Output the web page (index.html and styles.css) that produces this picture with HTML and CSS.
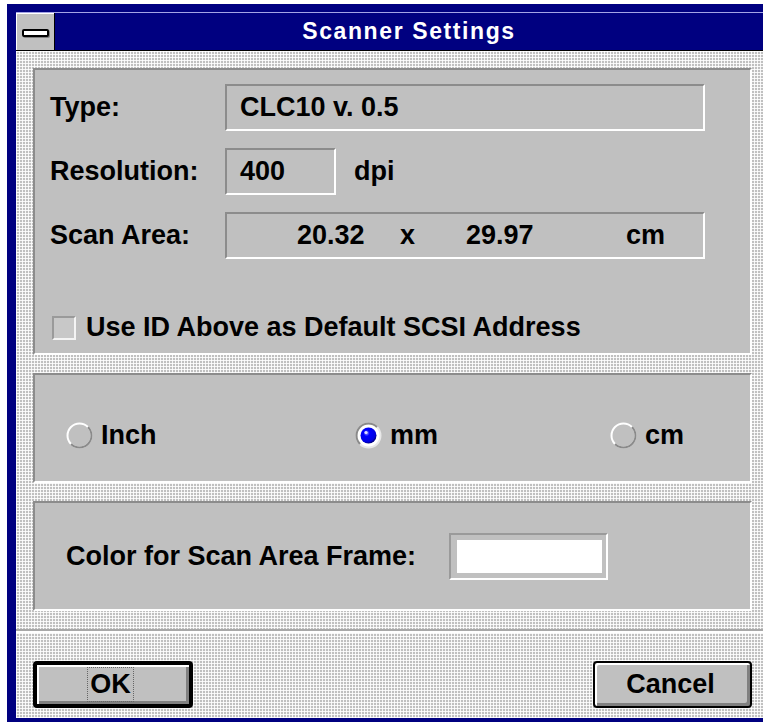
FILE: index.html
```html
<!DOCTYPE html>
<html lang="en">
<head>
<meta charset="utf-8">
<title>Scanner Settings</title>
<link rel="stylesheet" href="styles.css">
</head>
<body>
<div class="window">
  <div class="titlebar">
    <div class="sysmenu"><span class="dash"></span></div>
    <div class="title">Scanner Settings</div>
  </div>
  <div class="client">
    <div class="panels">
      <section class="panel panel-info">
        <div class="row">
          <span class="label">Type:</span>
          <div class="field field-wide">CLC10 v. 0.5</div>
        </div>
        <div class="row">
          <span class="label">Resolution:</span>
          <div class="field field-short">400</div>
          <span class="unit">dpi</span>
        </div>
        <div class="row">
          <span class="label">Scan Area:</span>
          <div class="field field-wide field-area">
            <span>20.32</span><span>x</span><span>29.97</span><span>cm</span>
          </div>
        </div>
        <label class="check-row">
          <span class="checkbox"></span>
          <span>Use ID Above as Default SCSI Address</span>
        </label>
      </section>

      <section class="panel panel-units">
        <label class="radio">
          <svg width="27" height="27" viewBox="0 0 27 27">
            <circle cx="13.5" cy="13.5" r="12" fill="#c0c0c0" stroke="#fff" stroke-width="2"/>
            <path d="M21.99 5.01 A12 12 0 0 1 5.01 21.99" fill="none" stroke="#8a8a8a" stroke-width="2"/>
          </svg>
          <span>Inch</span>
        </label>
        <label class="radio">
          <svg width="27" height="27" viewBox="0 0 27 27">
            <defs>
              <radialGradient id="ball" cx="0.38" cy="0.35" r="0.65">
                <stop offset="0" stop-color="#9a9aff"/>
                <stop offset="0.3" stop-color="#0000ff"/>
                <stop offset="0.85" stop-color="#0000e0"/>
                <stop offset="1" stop-color="#000080"/>
              </radialGradient>
            </defs>
            <circle cx="13.5" cy="13.5" r="12" fill="#fff" stroke="#e8e8e8" stroke-width="2"/>
            <path d="M5.01 21.99 A12 12 0 0 1 21.99 5.01" fill="none" stroke="#8a8a8a" stroke-width="2"/>
            <circle cx="13.5" cy="13.5" r="8" fill="url(#ball)"/>
            <circle cx="11" cy="10.5" r="1.6" fill="#e0e0ff"/>
          </svg>
          <span>mm</span>
        </label>
        <label class="radio">
          <svg width="27" height="27" viewBox="0 0 27 27">
            <circle cx="13.5" cy="13.5" r="12" fill="#c0c0c0" stroke="#fff" stroke-width="2"/>
            <path d="M21.99 5.01 A12 12 0 0 1 5.01 21.99" fill="none" stroke="#8a8a8a" stroke-width="2"/>
          </svg>
          <span>cm</span>
        </label>
      </section>

      <section class="panel panel-color">
        <span class="color-label">Color for Scan Area Frame:</span>
        <div class="swatch-frame"><div class="swatch"></div></div>
      </section>
    </div>

    <div class="separator"></div>

    <div class="buttons">
      <button class="btn btn-default"><span class="focus">OK</span></button>
      <button class="btn btn-cancel">Cancel</button>
    </div>
  </div>
</div>
</body>
</html>
```

FILE: styles.css
```css
* {
  box-sizing: border-box;
}

body {
  margin: 0;
  background: #fff;
  font-family: "Liberation Sans", Arial, sans-serif;
  font-weight: 700;
  font-size: 27px;
  color: #000;
}

/* Window frame */
.window {
  margin: 4px 0 0 7px;
  width: 756px;
  border-left: 9px solid #000080;
  border-top: 8px solid #000080;
  border-bottom: 4px solid #000080;
}

.titlebar {
  display: flex;
  height: 39px;
  background: #000080;
  border-top: 1px solid #a4a4e6;
  border-bottom: 1px solid #000;
}

.sysmenu {
  width: 39px;
  background: #c0c0c0;
  border-right: 1px solid #000;
  box-shadow: inset 1px 1px #fff;
  display: flex;
  align-items: center;
  justify-content: center;
}

.dash {
  width: 27px;
  height: 8px;
  background: #fff;
  border: 2px solid #000;
  border-radius: 2px;
  box-shadow: 1px 1px #808080;
  margin-top: 2px;
}

.title {
  flex: 1;
  text-align: center;
  color: #fff;
  font-size: 23px;
  letter-spacing: 1.6px;
  line-height: 37px;
}

/* Dialog body with dithered background */
.client {
  height: 667px;
  background-color: #c0c0c0;
  background-image:
    linear-gradient(90deg, rgba(255, 255, 255, 0.85) 1px, transparent 1px),
    linear-gradient(rgba(255, 255, 255, 0.85) 1px, transparent 1px);
  background-size: 3px 3px;
}

.panels {
  display: flex;
  flex-direction: column;
  gap: 18px;
  padding: 17px 11px 0 17px;
}

.panel {
  background: #c0c0c0;
  border: 2px solid;
  border-color: #8c8c8c #fff #fff #8c8c8c;
}

/* Scanner info */
.panel-info {
  height: 287px;
  padding: 14px 45px 0 15px;
  display: flex;
  flex-direction: column;
  gap: 17px;
}

.row {
  display: flex;
  align-items: center;
  height: 47px;
}

.label {
  width: 175px;
}

.field {
  height: 47px;
  border: 2px solid;
  border-color: #8c8c8c #fff #fff #8c8c8c;
  display: flex;
  align-items: center;
  padding-left: 13px;
}

.field-wide {
  width: 480px;
}

.field-short {
  width: 111px;
}

.unit {
  margin-left: 18px;
}

.field-area {
  display: grid;
  grid-template-columns: 103px 66px 160px auto;
  align-items: center;
  padding-left: 70px;
}

.check-row {
  display: flex;
  align-items: center;
  gap: 10px;
  margin-top: 36px;
  padding-left: 2px;
  font-weight: 700;
}

.checkbox {
  width: 24px;
  height: 24px;
  background: #c8c8c8;
  border: 2px solid;
  border-color: #9a9a9a #f4f4f4 #f4f4f4 #9a9a9a;
}

/* Units */
.panel-units {
  height: 110px;
  display: grid;
  grid-template-columns: 289px 255px auto;
  align-content: start;
  padding: 47px 0 0 31px;
}

.radio {
  display: flex;
  align-items: center;
  gap: 8px;
  height: 27px;
}

.radio svg {
  display: block;
  flex: none;
}

/* Frame colour */
.panel-color {
  height: 110px;
  display: flex;
  align-items: center;
  padding-left: 31px;
}

.color-label {
  width: 383px;
}

.swatch-frame {
  width: 159px;
  height: 47px;
  border: 2px solid;
  border-color: #9a9a9a #fff #fff #9a9a9a;
  padding: 5px 4px 5px 6px;
}

.swatch {
  width: 100%;
  height: 100%;
  background: #fff;
}

.separator {
  margin-top: 18px;
  height: 4px;
  border-top: 2px solid #a8a8a8;
  border-bottom: 2px solid #fff;
}

/* Push buttons */
.buttons {
  display: flex;
  justify-content: space-between;
  padding: 28px 11px 0 17px;
}

.btn {
  height: 47px;
  background: #c0c0c0;
  border: 2px solid #000;
  border-radius: 4px;
  box-shadow: inset 2px 2px #fff, inset -3px -3px #808080;
  font: inherit;
  color: #000;
  display: flex;
  align-items: center;
  justify-content: center;
  padding: 0;
}

.btn-default {
  width: 160px;
  border-width: 4px;
  padding-right: 5px;
}

.btn-cancel {
  width: 159px;
  padding-right: 4px;
}

.focus {
  outline: 1px dotted #666;
  padding: 0 2px;
  line-height: 33px;
}
```
